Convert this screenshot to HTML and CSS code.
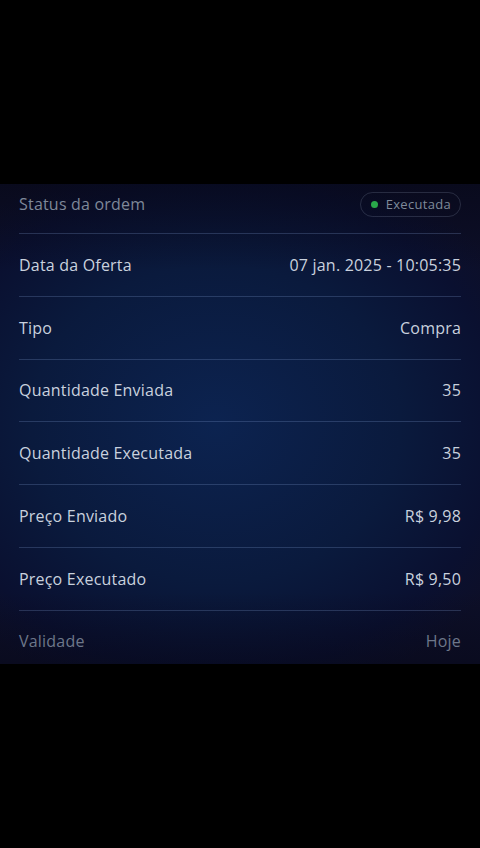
FILE: index.html
```html
<!DOCTYPE html>
<html lang="pt-BR">
  <head>
    <meta charset="UTF-8" />
    <title>Detalhes da ordem</title>
    <link rel="stylesheet" href="styles.css">
  </head>
  <body>
    <div class="panel">
      <div class="row row-first">
        <span class="label">Status da ordem</span>
        <span class="chip"><span class="dot"></span>Executada</span>
      </div>
      <div class="row">
        <span class="label">Data da Oferta</span>
        <span class="value">07 jan. 2025 - 10:05:35</span>
      </div>
      <div class="row">
        <span class="label">Tipo</span>
        <span class="value">Compra</span>
      </div>
      <div class="row">
        <span class="label">Quantidade Enviada</span>
        <span class="value">35</span>
      </div>
      <div class="row">
        <span class="label">Quantidade Executada</span>
        <span class="value">35</span>
      </div>
      <div class="row">
        <span class="label">Preço Enviado</span>
        <span class="value">R$ 9,98</span>
      </div>
      <div class="row">
        <span class="label">Preço Executado</span>
        <span class="value">R$ 9,50</span>
      </div>
      <div class="row row-last">
        <span class="label">Validade</span>
        <span class="value">Hoje</span>
      </div>
    </div>
  </body>
</html>
```

FILE: styles.css
```css
html, body {
  margin: 0;
  padding: 0;
  background-color: #000;
}
body {
  width: 480px;
  height: 848px;
  padding-top: 184px;
  box-sizing: border-box;
  font-family: 'Open Sans', 'Noto Sans', sans-serif;
  font-size: 16px;
  letter-spacing: 0.2px;
  color: #c9d1de;
}
.panel {
  height: 480px;
  padding: 0 19px;
  background:
    linear-gradient(180deg, rgba(6, 6, 20, 0.55) 0%, rgba(6, 6, 20, 0) 18%, rgba(6, 6, 20, 0) 85%, rgba(6, 6, 20, 0.45) 100%),
    radial-gradient(ellipse 70% 60% at 45% 50%, #0c2350 0%, #0a1a3d 55%, #0a1030 85%, #0d0f28 100%);
}
.row {
  display: flex;
  justify-content: space-between;
  align-items: center;
  height: 61.75px;
  border-bottom: 1px solid rgba(130, 160, 210, 0.25);
}
.row-first {
  height: 50px;
  padding-bottom: 9px;
  box-sizing: border-box;
  color: #7f8899;
}
.row-last {
  height: 54px;
  padding-top: 6px;
  box-sizing: border-box;
  border-bottom: none;
  color: #6d778a;
}
.chip {
  display: flex;
  align-items: center;
  gap: 8px;
  height: 23px;
  padding: 0 9px 0 10px;
  border: 1px solid rgba(160, 175, 200, 0.2);
  border-radius: 13px;
  font-size: 13px;
  letter-spacing: 0.3px;
  color: #7f8a9a;
}
.dot {
  width: 7px;
  height: 7px;
  border-radius: 50%;
  background-color: #29a84a;
}
```
